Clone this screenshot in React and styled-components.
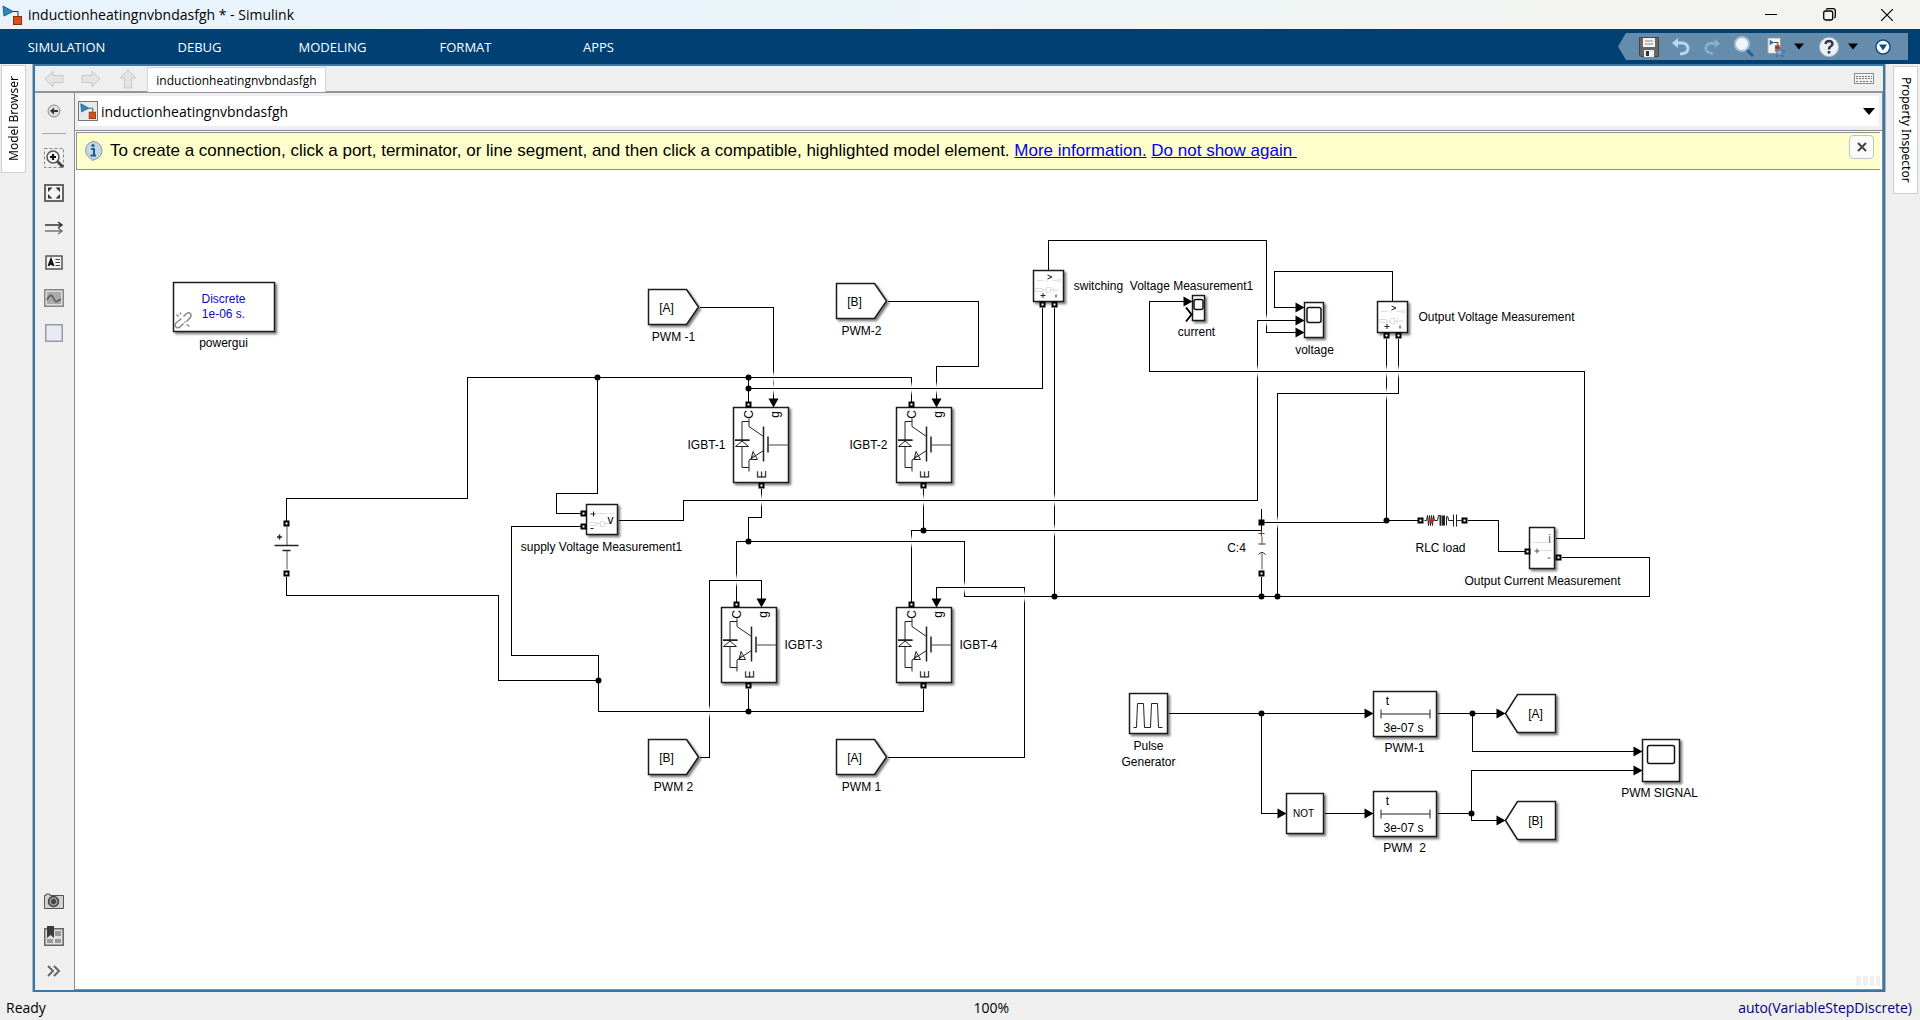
import React from 'react';
import styled, { createGlobalStyle } from 'styled-components';

const ui = '"Open Sans", "Noto Sans", sans-serif';
const arial = '"Liberation Sans", Arial, sans-serif';

const GlobalStyle = createGlobalStyle`
  * {
    box-sizing: border-box;
  }

  body {
    margin: 0;
    background: #efefef;
    font-family: ${ui};
    color: #000;
  }

  button {
    padding: 0;
    border: 0;
    background: none;
    font: inherit;
    color: inherit;
  }
`

const Window = styled.div`
  display: flex;
  flex-direction: column;
  height: 100vh;
`

/* title bar */

const TitleBar = styled.header`
  display: flex;
  align-items: center;
  height: 29px;
  padding: 0 4px 0 2px;
  background: linear-gradient(90deg, #e9f3fc 0%, #ebf4f9 45%, #eef5f5 60%, #f3f3f1 85%);
`

const Title = styled.h1`
  flex: 1;
  margin: 0 0 0 6px;
  font-size: 14px;
  font-weight: 400;
`

const WindowButton = styled.button`
  display: flex;
  align-items: center;
  justify-content: center;
  width: 58px;
  height: 29px;
`

/* ribbon */

const Ribbon = styled.nav`
  display: flex;
  height: 35px;
  background: #004073;
`

const RibbonTab = styled.button`
  width: 133px;
  color: #fff;
  font-size: 13px;
`

const QuickAccess = styled.div`
  display: flex;
  align-items: center;
  height: 27px;
  margin: 4px 12px 0 auto;
  padding: 0 3px 0 21px;
  background: #668cab;
  clip-path: polygon(8px 0, 100% 0, 100% 100%, 8px 100%, 0 50%);
`

const QuickButton = styled.button`
  display: flex;
  align-items: center;
  justify-content: center;
  width: ${p => p.$width || 32}px;
  height: 27px;
`

/* body */

const Body = styled.div`
  display: flex;
  flex: 1;
  min-height: 0;
`

const Rail = styled.aside`
  width: ${p => (p.$right ? 35 : 33)}px;
  padding: ${p => (p.$right ? '2px 0 0 7px' : '1px 0 0 1px')};
  border: 0 solid #b4b4b4;
  border-width: ${p => (p.$right ? '0 0 0 1px' : '0 1px 0 0')};
`

const RailTab = styled.button`
  width: 25px;
  height: ${p => (p.$flip ? 108 : 128)}px;
  border: 1px solid #cfcfcf;
  background: #fff;
  font-family: "Noto Sans", sans-serif;
  font-size: 12px;
  line-height: 22px;
  white-space: nowrap;
  writing-mode: vertical-rl;

  span {
    display: block;
    transform: ${p => (p.$flip ? 'rotate(180deg)' : 'none')};
  }
`

const Editor = styled.main`
  display: flex;
  flex: 1;
  flex-direction: column;
  min-width: 0;
  border: 2px solid #3877ab;
`

const TabBar = styled.div`
  display: flex;
  align-items: stretch;
  height: 27px;
  padding-right: 9px;
  border-bottom: 2px solid #92959c;
`

const NavButtons = styled.div`
  display: flex;
  align-items: center;
  justify-content: space-between;
  width: 112px;
  padding: 0 9px;
`

const DocumentTab = styled.button`
  width: 179px;
  margin: 1px auto -1px 0;
  border: 1px solid #d4d4d4;
  border-bottom: 0;
  background: #fff;
  font-size: 12px;
`

const IconButton = styled.button`
  display: flex;
  align-items: center;
  justify-content: center;
`

const Workspace = styled.div`
  display: flex;
  flex: 1;
  min-height: 0;
`

const Palette = styled.div`
  display: flex;
  flex-direction: column;
  width: 39px;
  padding-bottom: 2px;
`

const PaletteButton = styled(IconButton)`
  width: 38px;
  height: 35px;
`

const PaletteLine = styled.hr`
  width: 24px;
  height: 1px;
  margin: 5px 0 6px 7px;
  border: 0;
  background: #a8a8a8;
`

const Spacer = styled.div`
  flex: 1;
`

const Sheet = styled.section`
  display: flex;
  flex: 1;
  flex-direction: column;
  min-width: 0;
  border: 1px solid #898c93;
  border-top: 0;
  background: #fff;
`

const AddressBar = styled.div`
  height: 38px;
  padding: 3px 3px 4px;
  border-bottom: 1px solid #85888f;
  background: #efefef;
`

const Address = styled.button`
  display: flex;
  align-items: center;
  gap: 3px;
  width: 100%;
  height: 30px;
  padding-right: 4px;
  background: #fff;
  font-size: 14px;
  text-align: left;

  span {
    flex: 1;
  }
`

const Banner = styled.div`
  display: flex;
  align-items: center;
  height: 38px;
  margin: 1px 2px 0 1px;
  padding: 0 6px;
  border: 1px solid #8d8f92;
  border-right: 0;
  background: #ffffcb;
  font-family: ${arial};
  font-size: 17px;
`

const BannerText = styled.p`
  flex: 1;
  margin: 0 0 0 7px;
  white-space: pre;

  a {
    color: #0000ee;
  }
`

const BannerClose = styled.button`
  width: 25px;
  height: 24px;
  margin-bottom: 8px;
  border: 1px solid #c2c2cc;
  border-radius: 4px;
  background: #fbfbfb;
`

const Canvas = styled.svg`
  display: block;
  flex: 1;
  width: 100%;
  min-height: 0;
`

const StatusBar = styled.footer`
  display: grid;
  grid-template-columns: 15fr auto 14fr;
  align-items: center;
  height: 28px;
  padding: 2px 8px 0 6px;
  font-size: 14px;

  span:last-child {
    color: #00007c;
    text-align: right;
  }
`

/* diagram parts */

const Wire = styled.path`
  fill: none;
  stroke: #000;
  shape-rendering: crispEdges;
`

const Box = styled.rect`
  fill: #fff;
  stroke: #1a1a1a;
  stroke-width: 1.5;
  filter: url(#shadow);
`

const Shape = styled.path`
  fill: #fff;
  stroke: #1a1a1a;
  stroke-width: 1.5;
  filter: url(#shadow);
`

const Thin = styled.path`
  fill: none;
  stroke: ${p => p.$color || '#222'};
  stroke-width: ${p => p.$width || 1};
`

const Label = styled.text`
  font-family: ${arial};
  font-size: ${p => p.$size || 12}px;
  fill: ${p => p.$color || '#000'};
  text-anchor: middle;
  white-space: pre;
`

const wires = [
  'M286 520V498H467V377H911V401',
  'M597 377V493H556V513H580',
  'M580 526H511V655H598V711H923V688',
  'M286 576V595H498V680H598',
  'M618 520H683V500H1257V320H1298',
  'M699 307H773V399',
  'M748 377V401',
  'M748 388H1042V307',
  'M887 301H978V366H936V399',
  'M761 488V517H748V541',
  'M736 601V541H964V596H1649V557H1561',
  'M923 488V530',
  'M911 601V530H1261V508',
  'M699 757H709V580H761V599',
  'M887 757H1024V587H936V599',
  'M748 688V711',
  'M1048 269V240H1266V332H1298',
  'M1054 307V596',
  'M1185 301H1149V371H1584V538H1555',
  'M1298 307H1274V271H1392V300',
  'M1386 338V520H1417',
  'M1398 338V393H1277V596',
  'M1261 522H1386',
  'M1261 576V596',
  'M1467 520H1498V551H1524',
  'M1168 713H1366',
  'M1261 713V813H1278',
  'M1324 813H1366',
  'M1437 713H1497',
  'M1472 713V751H1634',
  'M1437 813H1471V770H1634',
  'M1471 813V820H1497',
]

const crossings = [
  [773, 377], [773, 388], [911, 388], [936, 388], [761, 500], [923, 500],
  [1054, 500], [1054, 530], [911, 541], [736, 580], [964, 587], [1024, 596],
  [709, 711], [1257, 371], [1386, 371], [1398, 371], [1386, 393], [1277, 522],
  [1266, 320],
]

const dots = [
  [597, 377], [748, 377], [748, 388], [748, 541], [923, 530], [598, 680],
  [748, 711], [1054, 596], [1261, 596], [1277, 596], [1386, 520],
  [1261, 713], [1472, 713], [1471, 813],
]

const ports = [
  [286, 523], [286, 573], [583, 513], [583, 526], [748, 404], [911, 404],
  [761, 485], [923, 485], [736, 604], [911, 604], [748, 685], [923, 685],
  [1042, 304], [1054, 304], [1386, 335], [1398, 335], [1261, 573],
  [1420, 520], [1464, 520], [1527, 551], [1558, 557],
]

const downArrows = [[773, 407], [936, 407], [761, 607], [936, 607]]

const rightArrows = [
  [1192, 301], [1304, 307], [1304, 320], [1304, 332], [1373, 713],
  [1373, 813], [1286, 813], [1505, 713], [1505, 820], [1642, 751], [1642, 770],
]

const labels = [
  [223, 346, 'powergui'],
  [673, 340, 'PWM -1'],
  [861, 334, 'PWM-2'],
  [706, 448, 'IGBT-1'],
  [868, 448, 'IGBT-2'],
  [803, 648, 'IGBT-3'],
  [978, 648, 'IGBT-4'],
  [673, 790, 'PWM 2'],
  [861, 790, 'PWM 1'],
  [601, 550, 'supply Voltage Measurement1'],
  [1163, 289, 'switching  Voltage Measurement1'],
  [1196, 335, 'current'],
  [1314, 353, 'voltage'],
  [1496, 320, 'Output Voltage Measurement'],
  [1236, 551, 'C:4'],
  [1440, 551, 'RLC load'],
  [1542, 584, 'Output Current Measurement'],
  [1148, 749, 'Pulse'],
  [1148, 765, 'Generator'],
  [1404, 751, 'PWM-1'],
  [1404, 851, 'PWM  2'],
  [1659, 796, 'PWM SIGNAL'],
]

const FromTag = ({ x, y, name }) => (
  <g transform={`translate(${x} ${y})`}>
    <Shape d="M0 0H38L50 17.5L38 35H0Z" />
    <Label x="18" y="22">[{name}]</Label>
  </g>
)

const GotoTag = ({ x, y, name }) => (
  <g transform={`translate(${x} ${y})`}>
    <Shape d="M0 19L12 0H50V38H12Z" />
    <Label x="30" y="23">[{name}]</Label>
  </g>
)

const Igbt = ({ x, y }) => (
  <g transform={`translate(${x} ${y})`}>
    <Box width="55" height="75" />
    <Label $size={12} transform="translate(19 7) rotate(-90)">C</Label>
    <Label $size={12} transform="translate(45 7) rotate(-90)">g</Label>
    <Label $size={12} transform="translate(32 67) rotate(-90)">E</Label>
    <Thin d="M15.5 11V19L30 29M30 43L15.5 52.5V64M15.5 14H8.5V33M8.5 39V60H15.5M1.5 33H16M2 39L8.5 33.5L15 39Z" />
    <Thin d="M17.5 52L19.5 44L24 52ZM20 48L17.5 52" />
    <Thin $width={1.5} d="M30 19V54M34.5 29V45M1.500 32.500H16" />
    <Thin $color="#444" d="M35 37.5H55" />
  </g>
)

const VoltageMeter = ({ x, y }) => (
  <g transform={`translate(${x} ${y})`}>
    <Box width="30" height="31" />
    <Thin $color="#ddd" d="M3 10H10M12 11L14 10M19 10H24M2 18H9V21H2ZM9 19.5H13M13 17H17V22H13ZM17 19.5H26M20 17V22" />
    <circle cx="26" cy="10" r="1.5" fill="none" stroke="#ddd" />
    <Thin d="M14 4.5L18.5 6.500L14 8.5M9.5 22.5V27.5M7 25H12M22.500 24V27" />
  </g>
)

const Scope = ({ x, y, width, height, screen }) => (
  <g transform={`translate(${x} ${y})`}>
    <Box width={width} height={height} />
    <rect
      x={screen[0]}
      y={screen[1]}
      width={screen[2]}
      height={screen[3]}
      rx="2"
      fill="#fff"
      stroke="#111"
      strokeWidth="1.5"
    />
  </g>
)

const Delay = ({ x, y }) => (
  <g transform={`translate(${x} ${y})`}>
    <Box width="63" height="45" />
    <Label x="14" y="13">t</Label>
    <Thin d="M7.5 22.5H56.5M7.5 18V27M56.5 18V27" />
    <Label x="30" y="40">3e-07 s</Label>
  </g>
)

const Diagram = () => (
  <Canvas role="img" aria-label="inductionheatingnvbndasfgh">
    <defs>
      <filter id="shadow" x="-20%" y="-20%" width="150%" height="150%">
        <feDropShadow dx="2" dy="2" stdDeviation="1.3" floodColor="#000" floodOpacity="0.5" />
      </filter>
      <linearGradient id="fade" x1="0" y1="0" x2="0" y2="1">
        <stop offset="0" stopColor="#fff" stopOpacity="0" />
        <stop offset="0.4" stopColor="#fff" />
        <stop offset="0.6" stopColor="#fff" />
        <stop offset="1" stopColor="#fff" stopOpacity="0" />
      </linearGradient>
    </defs>

    <g transform="translate(-74.5 -169.5)">
      {wires.map(d => <Wire key={d} d={d} />)}
      {crossings.map(([x, y]) => (
        <g key={`${x} ${y}`}>
          <rect x={x - 1} y={y - 7} width="2" height="14" fill="url(#fade)" />
          <Wire d={`M${x - 2} ${y}H${x + 2}`} />
        </g>
      ))}

      <Box x="173" y="282" width="101" height="49" />
      <Label x="223" y="302" $color="#0b0bc4">Discrete</Label>
      <Label x="223" y="317" $color="#0b0bc4">1e-06 s.</Label>
      <Thin
        $color="#888"
        $width={1.5}
        d="M183 316L186 313Q189 311 190.500 314Q191 316 189 318L186 321M181 318L176 322Q173 325 176 327Q178 328 180 326L183 323M176 314L178 316M180 312V314M186 324L189 326M184 321L185 322"
      />

      <FromTag x={648} y={289} name="A" />
      <FromTag x={836} y={283} name="B" />
      <FromTag x={648} y={739} name="B" />
      <FromTag x={836} y={739} name="A" />
      <Igbt x={733} y={407} />
      <Igbt x={896} y={407} />
      <Igbt x={721} y={607} />
      <Igbt x={896} y={607} />

      {/* supply meter, the same block lying on its side */}
      <Box x="586" y="504" width="31" height="30" />
      <Thin $color="#ddd" d="M597 513H607M609 513H614M589 522H596V525H589M596 523H600M600 521H604V526H600ZM604 523H610" />
      <Thin d="M593 511V516M590 513.500H595M590 528H593" />
      <Label x="610" y="523" $size={12}>v</Label>

      <VoltageMeter x={1033} y={270} />
      <VoltageMeter x={1377} y={301} />
      <Scope x={1192} y={295} width={12} height={25} screen={[1.5, 4, 9, 10]} />
      <Thin $color="#000" $width={2} d="M1185.500 307L1191 314L1185.500 321" />
      <Scope x={1304} y={302} width={19} height={35} screen={[2.5, 5, 14, 15]} />
      <Scope x={1642} y={739} width={37} height={42} screen={[5, 6, 27, 18]} />

      {/* battery */}
      <Thin $color="#555" d="M286.500 526V545M286.500 550V569" />
      <Thin $width={1.5} d="M274 545H298M282 550H290M279 534V539M276.500 536.500H281.500" />

      {/* capacitor */}
      <rect x="1258" y="519" width="6" height="6" />
      <Thin $color="#555" d="M1261.500 536V543M1261.500 553V569" />
      <Thin d="M1258 543.500H1265M1258 554Q1261.500 550 1265 554" />
      <Thin $color="#e01010" d="M1261 530V536M1258 533H1264" />

      {/* RLC branch */}
      <Thin d="M1424 520H1426L1427 515L1428 525L1429 515L1430 525L1431 515L1432 525L1433 515L1434 520H1437L1438 515H1440V525M1442 525V515M1444 525V515M1446 525V516Q1448 515 1448 520H1453M1453 514V526M1456 514V526M1456 520H1461" />
      <Thin $width={2} d="M1440 515V525M1443 515V525" />
      <Thin $color="#e01010" d="M1429 520H1434M1431.500 517V523" />

      {/* output current meter */}
      <Box x="1529" y="527" width="25" height="41" />
      <Thin $color="#ccc" $width={1} strokeDasharray="2 1" d="M1532 542H1548M1540 550H1552" />
      <Thin $color="#555" d="M1536.500 548V553M1534 550.500H1539M1547 557.500H1550" />
      <Label x="1549" y="542" $color="#555">i</Label>

      <Box x="1129" y="693" width="38" height="40" />
      <Thin d="M1133 727H1136L1137 703H1143L1144 727H1150L1151 703H1157L1158 727H1162" />
      <Box x="1286" y="793" width="37" height="40" />
      <Label x="1303" y="816" $size={10}>NOT</Label>
      <Delay x={1373} y={691} />
      <Delay x={1373} y={791} />
      <GotoTag x={1505} y={694} name="A" />
      <GotoTag x={1505} y={801} name="B" />

      {dots.map(([x, y]) => <circle key={`${x} ${y}`} cx={x} cy={y} r="3" />)}
      {ports.map(([x, y]) => (
        <g key={`${x} ${y}`}>
          <rect x={x - 3} y={y - 3} width="6" height="6" />
          <rect x={x - 1} y={y - 1} width="2" height="2" fill="#fff" />
        </g>
      ))}
      {downArrows.map(([x, y]) => (
        <path key={`${x} ${y}`} d={`M${x - 5} ${y - 9}h10l-5 9z`} />
      ))}
      {rightArrows.map(([x, y]) => (
        <path key={`${x} ${y}`} d={`M${x - 9} ${y - 5}v10l9 -5z`} />
      ))}
      {labels.map(([x, y, text]) => (
        <Label key={text} x={x} y={y}>{text}</Label>
      ))}
    </g>

    <svg x="100%" y="100%" overflow="visible">
      <path d="M-26 -13h5v10h-5zM-19 -13h5v10h-5zM-12 -13h4v10h-4zM-6 -13h4v10h-4z" fill="#efefef" />
    </svg>
  </Canvas>
)

/* icons */

const ModelIcon = ({ boxed }) => (
  <svg width="20" height="20" viewBox="0 0 20 20" aria-hidden="true">
    {boxed && <rect x="0.500" y="0.500" width="19" height="19" fill="#e6e8ea" stroke="#777" />}
    <g transform={boxed ? 'translate(2 2) scale(.8)' : ''}>
      <path d="M11 6.500H16V12" fill="none" stroke="#333" />
      <path d="M1 1L11 6.500L2 11Z" fill="#2f86c0" stroke="#1d5f8f" />
      <rect x="11.500" y="11.500" width="8" height="8" fill="#d8501c" stroke="#8c2f0c" />
    </g>
  </svg>
)

const Caret = ({ width = 12 }) => (
  <svg width={width} height="7" viewBox="0 0 12 7" aria-hidden="true">
    <path d="M0 0H12L6 7Z" />
  </svg>
)

const NavArrow = ({ turn }) => (
  <svg width="20" height="20" viewBox="0 0 20 20" aria-hidden="true">
    <path
      d="M1 10L9 2V6.500H19V13.500H9V18Z"
      fill="#e4e4e4"
      stroke="#c8c8c8"
      transform={`rotate(${turn} 10 10)`}
    />
  </svg>
)

const SaveIcon = () => (
  <svg width="20" height="20" viewBox="0 0 20 20">
    <path d="M0.500 0.500H19.500V19.500H2L0.500 18Z" fill="#666" stroke="#444" />
    <rect x="4" y="1" width="12" height="9" fill="#f3f3f3" />
    <path d="M6 4H14M6 7H14" stroke="#888" />
    <rect x="5" y="13" width="10" height="7" fill="#eee" />
    <rect x="7" y="14" width="3" height="5" fill="#333" />
  </svg>
)

const UndoIcon = ({ color, flip }) => (
  <svg width="20" height="20" viewBox="0 0 20 20">
    <g fill="none" stroke={color} strokeWidth="3" transform={flip ? 'translate(20 0) scale(-1 1)' : ''}>
      <path d="M5 6H12Q17 7 17 12Q16 17 9 17" />
      <path d="M7 1L1 6L7 11Z" fill={color} stroke="none" />
    </g>
  </svg>
)

const SearchIcon = () => (
  <svg width="22" height="22" viewBox="0 0 22 22">
    <path d="M12 12L20 20" stroke="#24608f" strokeWidth="3" />
    <circle cx="9" cy="8" r="7" fill="#eef6fb" stroke="#a9bfd0" strokeWidth="2" />
  </svg>
)

const LibraryIcon = () => (
  <svg width="20" height="22" viewBox="0 0 20 22">
    <rect x="1" y="1" width="14" height="17" fill="#f4f4f2" stroke="#9a9a9a" />
    <path d="M3 3V9L8 6Z" fill="#1f78b8" />
    <path d="M8 6H12V9" fill="none" stroke="#222" />
    <rect x="9" y="9" width="5" height="5" fill="#b5371a" />
    <path d="M14 11L15.500 15H20L16.500 17.500L18 22L14 19.500L10 22L11.500 17.500L9 15H12.500Z" fill="#7fa9cc" stroke="#3b6289" />
  </svg>
)

const HelpIcon = () => (
  <svg width="20" height="20" viewBox="0 0 20 20">
    <circle cx="10" cy="10" r="9.500" fill="#eef0f4" stroke="#b3bcc8" />
    <path d="M6.500 7Q7 4 10 4Q13.500 4.200 13.500 7Q13 9 11 10Q10 11 10 12.500" fill="none" stroke="#333b4a" strokeWidth="2.500" />
    <rect x="8.700" y="14" width="2.600" height="2.600" fill="#333b4a" />
  </svg>
)

const CollapseIcon = () => (
  <svg width="16" height="16" viewBox="0 0 16 16">
    <circle cx="8" cy="8" r="7" fill="#fff" stroke="#0f4c81" strokeWidth="1.500" />
    <path d="M4 5.500H12L8 11.500Z" fill="#0f4c81" />
  </svg>
)

const KeyboardIcon = () => (
  <svg width="20" height="12" viewBox="0 0 20 12">
    <rect x="0.500" y="0.500" width="19" height="10" fill="#f2f2f2" stroke="#8c8c8c" />
    <path d="M2 3.500H18M2 5.500H18M2 8.500H4M6 8.500H14M16 8.500H18" stroke="#777" strokeDasharray="2 1" />
  </svg>
)

const InfoIcon = () => (
  <svg width="20" height="20" viewBox="0 0 20 20" aria-hidden="true">
    <path d="M10 0.500A9 9 0 0 1 13 18L9 19.500V18A9 9 0 0 1 10 0.500Z" fill="#c3d6e6" stroke="#8a9aa8" />
    <circle cx="10" cy="4.500" r="1.600" fill="#1b5f98" />
    <path d="M8 8H11V14M7.500 14.500H13" fill="none" stroke="#1b5f98" strokeWidth="2" />
  </svg>
)

const HideIcon = () => (
  <svg width="14" height="14" viewBox="0 0 14 14">
    <circle cx="7" cy="7" r="6" fill="#ddd" stroke="#888" />
    <path d="M3 7L7 3.500V6H11V8H7V10.500Z" fill="#333" />
  </svg>
)

const ZoomIcon = () => (
  <svg width="20" height="20" viewBox="0 0 20 20">
    <rect x="0.500" y="0.500" width="19" height="19" fill="none" stroke="#888" strokeDasharray="3 2" />
    <path d="M13 13L19 19" stroke="#444" strokeWidth="3" />
    <circle cx="9" cy="9" r="6" fill="#f2f2f2" stroke="#555" strokeWidth="1.500" />
    <path d="M9 6V12M6 9H12" stroke="#111" strokeWidth="2" />
  </svg>
)

const FitIcon = () => (
  <svg width="20" height="18" viewBox="0 0 20 18">
    <rect x="1" y="1" width="18" height="16" fill="#f5f5f5" stroke="#666" strokeWidth="2" />
    <path d="M4 3.500H8.500L4 8ZM16 3.500H11.500L16 8ZM4 14.500H8.500L4 10ZM16 14.500H11.500L16 10Z" fill="#333" />
  </svg>
)

const SampleIcon = () => (
  <svg width="20" height="14" viewBox="0 0 20 14">
    <path d="M1 4H17M14 1L18 4L14 7" fill="none" stroke="#333" strokeWidth="1.500" />
    <path d="M1 10H17M14 7L18 10L14 13" fill="none" stroke="#777" strokeWidth="1.500" />
  </svg>
)

const NoteIcon = () => (
  <svg width="18" height="15" viewBox="0 0 18 15">
    <rect x="1" y="1" width="16" height="13" fill="#f6f6f6" stroke="#555" strokeWidth="1.500" />
    <path d="M3.500 11L6 4.500L8.500 11M4.500 9H7.500" fill="none" stroke="#111" strokeWidth="2" />
    <path d="M10.500 4.500H15M10.500 7.500H15M10.500 10.500H15" stroke="#444" />
  </svg>
)

const ImageIcon = () => (
  <svg width="20" height="18" viewBox="0 0 20 18">
    <rect x="0.750" y="0.750" width="18.500" height="16.500" fill="#ddd" stroke="#888" strokeWidth="1.500" />
    <rect x="3" y="3" width="14" height="12" fill="#aaa" />
    <path d="M3 11Q6 4 9 8Q11 14 14 12L17 10" fill="none" stroke="#666" strokeWidth="2" />
  </svg>
)

const AreaIcon = () => (
  <svg width="18" height="18" viewBox="0 0 18 18">
    <rect x="0.750" y="0.750" width="16.500" height="16.500" fill="#e8e8f8" stroke="#9a9aa2" strokeWidth="1.500" />
  </svg>
)

const CameraIcon = () => (
  <svg width="20" height="16" viewBox="0 0 20 16">
    <path d="M0.500 2.500H2V1H6V2.500H19.500V15.500H0.500Z" fill="#d0d0d0" stroke="#555" />
    <circle cx="9.500" cy="8.500" r="5" fill="#999" stroke="#444" strokeWidth="1.500" />
    <circle cx="9.500" cy="8.500" r="2.500" fill="#444" />
  </svg>
)

const BookmarkIcon = () => (
  <svg width="20" height="20" viewBox="0 0 20 20">
    <rect x="0.750" y="2.750" width="18.500" height="16.500" fill="#dedede" stroke="#666" strokeWidth="1.500" />
    <path d="M11 5H17V10H11ZM11 13H17V17H11ZM3 13H9V17H3Z" fill="#999" />
    <path d="M3 0H10V12L6.500 9L3 12Z" fill="#3a3a3a" />
  </svg>
)

const MoreIcon = () => (
  <svg width="14" height="12" viewBox="0 0 14 12">
    <path d="M1 1L6 6L1 11M7 1L12 6L7 11" fill="none" stroke="#666" strokeWidth="2" />
  </svg>
)

const paletteTop = [
  ['Zoom', ZoomIcon],
  ['Fit to view', FitIcon],
  ['Sample time', SampleIcon],
  ['Annotation', NoteIcon],
  ['Image', ImageIcon],
  ['Area', AreaIcon],
]

const paletteBottom = [
  ['Screenshot', CameraIcon],
  ['Viewmarks', BookmarkIcon],
  ['More', MoreIcon],
]

const PaletteItems = ({ items }) => items.map(([name, Icon]) => (
  <PaletteButton key={name} aria-label={name}><Icon /></PaletteButton>
))

export default () => {
  return (
    <Window>
      <GlobalStyle />
      <TitleBar>
        <ModelIcon />
        <Title>inductionheatingnvbndasfgh * - Simulink</Title>
        <WindowButton aria-label="Minimize">
          <svg width="12" height="12"><path d="M0 5.500H12" stroke="#000" /></svg>
        </WindowButton>
        <WindowButton aria-label="Restore">
          <svg width="13" height="13" viewBox="0 0 13 13" fill="none" stroke="#000" strokeWidth="1.300">
            <rect x="0.700" y="3" width="9" height="9" rx="2" />
            <path d="M3 1.500Q4 0.700 5 0.700H10Q12.300 0.700 12.300 3V8Q12.300 9 11.500 10" />
          </svg>
        </WindowButton>
        <WindowButton aria-label="Close">
          <svg width="12" height="12"><path d="M0 0L12 12M12 0L0 12" stroke="#000" strokeWidth="1.200" /></svg>
        </WindowButton>
      </TitleBar>

      <Ribbon>
        {['SIMULATION', 'DEBUG', 'MODELING', 'FORMAT', 'APPS'].map(name => (
          <RibbonTab key={name}>{name}</RibbonTab>
        ))}
        <QuickAccess>
          <QuickButton $width={20} aria-label="Save"><SaveIcon /></QuickButton>
          <QuickButton $width={44} aria-label="Undo"><UndoIcon color="#b7d9f0" /></QuickButton>
          <QuickButton $width={18} aria-label="Redo"><UndoIcon color="#86b0cf" flip /></QuickButton>
          <QuickButton $width={46} aria-label="Find"><SearchIcon /></QuickButton>
          <QuickButton $width={18} aria-label="Library"><LibraryIcon /></QuickButton>
          <QuickButton $width={28} aria-label="Library options"><Caret width={10} /></QuickButton>
          <QuickButton aria-label="Help"><HelpIcon /></QuickButton>
          <QuickButton $width={16} aria-label="Help options"><Caret width={10} /></QuickButton>
          <QuickButton $width={44} aria-label="Collapse"><CollapseIcon /></QuickButton>
        </QuickAccess>
      </Ribbon>

      <Body>
        <Rail>
          <RailTab $flip><span>Model Browser</span></RailTab>
        </Rail>

        <Editor>
          <TabBar>
            <NavButtons>
              <IconButton aria-label="Back"><NavArrow turn={0} /></IconButton>
              <IconButton aria-label="Forward"><NavArrow turn={180} /></IconButton>
              <IconButton aria-label="Up"><NavArrow turn={90} /></IconButton>
            </NavButtons>
            <DocumentTab>inductionheatingnvbndasfgh</DocumentTab>
            <IconButton aria-label="Keyboard shortcuts"><KeyboardIcon /></IconButton>
          </TabBar>

          <Workspace>
            <Palette>
              <PaletteButton aria-label="Hide browser"><HideIcon /></PaletteButton>
              <PaletteLine />
              <PaletteItems items={paletteTop} />
              <Spacer />
              <PaletteItems items={paletteBottom} />
            </Palette>

            <Sheet>
              <AddressBar>
                <Address>
                  <ModelIcon boxed />
                  <span>inductionheatingnvbndasfgh</span>
                  <Caret />
                </Address>
              </AddressBar>
              <Banner>
                <InfoIcon />
                <BannerText>
                  To create a connection, click a port, terminator, or line segment, and then click a compatible, highlighted model element. <a href="#more">More information.</a> <a href="#hide">Do not show again </a>
                </BannerText>
                <BannerClose aria-label="Close">
                  <svg width="10" height="10"><path d="M1 1L9 9M9 1L1 9" stroke="#444" strokeWidth="2" /></svg>
                </BannerClose>
              </Banner>
              <Diagram />
            </Sheet>
          </Workspace>
        </Editor>

        <Rail $right>
          <RailTab><span>Property Inspector</span></RailTab>
        </Rail>
      </Body>

      <StatusBar>
        <span>Ready</span>
        <span>100%</span>
        <span>auto(VariableStepDiscrete)</span>
      </StatusBar>
    </Window>
  )
}
